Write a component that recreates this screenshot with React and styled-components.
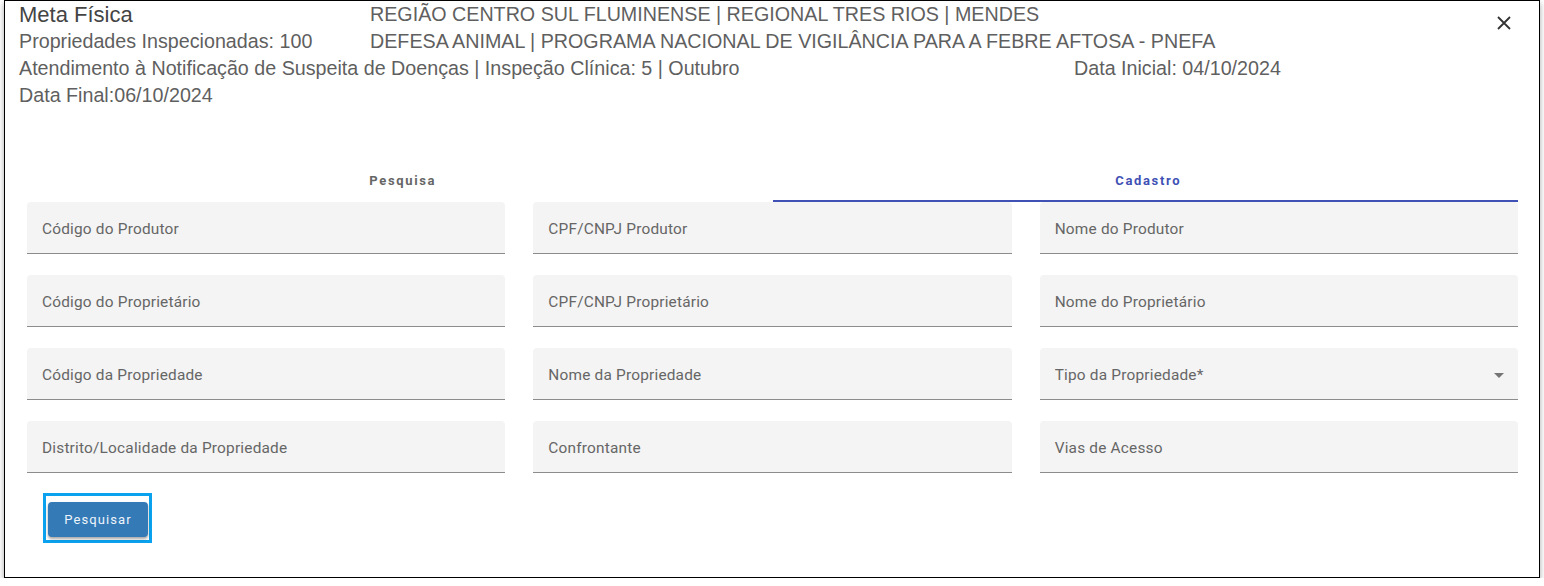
import React from 'react'
import styled, { createGlobalStyle } from 'styled-components'

const GlobalStyle = createGlobalStyle`
  body {
    margin: 0;
    background: #fff;
    font-family: "Liberation Sans", Arial, sans-serif;
  }
`

const Dialog = styled.div`
  box-sizing: border-box;
  margin: 0 4px;
  width: 1536px;
  height: 578px;
  border: 1px solid #000;
  background: #fff;
  box-shadow: 0 3px 6px rgba(0, 0, 0, 0.35);
  position: relative;
`

const Header = styled.div`
  padding: 0 0 0 14px;
  color: #5f5f5f;
  font-size: 19.7px;
  line-height: 27px;
`

const Line = styled.div`
  display: flex;
  white-space: nowrap;
`

const Cell = styled.span`
  width: ${p => p.w || 'auto'};
  flex: none;
  font-size: ${p => (p.big ? '22px' : 'inherit')};
  color: ${p => (p.big ? '#444' : 'inherit')};
`

const Close = styled.button`
  position: absolute;
  top: 12px;
  right: 25px;
  border: none;
  background: none;
  padding: 0;
  width: 20px;
  height: 20px;
  cursor: pointer;
`

const Body = styled.div`
  padding: 45px 21px 0 22px;
  font-family: Roboto, "Liberation Sans", sans-serif;
`

const Tabs = styled.div`
  display: flex;
  height: 48px;
`

const Tab = styled.div`
  flex: 1;
  display: flex;
  align-items: center;
  justify-content: center;
  font-size: 13px;
  font-weight: 700;
  letter-spacing: 1.65px;
  color: ${p => (p.active ? '#3f51b5' : '#666')};
  border-bottom: 2px solid ${p => (p.active ? '#3f51b5' : 'transparent')};
  box-sizing: border-box;
  padding: 6px 0 0 6px;
`

const Grid = styled.div`
  display: grid;
  grid-template-columns: repeat(3, 1fr);
  column-gap: 28px;
  row-gap: 21px;
`

const Field = styled.div`
  height: 52px;
  box-sizing: border-box;
  background: #f4f4f4;
  border-radius: 4px 4px 0 0;
  border-bottom: 1px solid #8c8c8c;
  display: flex;
  align-items: center;
  justify-content: space-between;
  padding: 3px 15px 0 15px;
  font-size: 15.4px;
  letter-spacing: 0.2px;
  color: #666;
`

const Arrow = styled.span`
  width: 0;
  height: 0;
  border-left: 5px solid transparent;
  border-right: 5px solid transparent;
  border-top: 5px solid #757575;
  margin-right: -1px;
`

const Actions = styled.div`
  padding: 20px 0 0 16px;
`

const Focus = styled.div`
  display: inline-block;
  border: 3px solid #0aa2ee;
  padding: 6px 1px 3px 2px;
`

const Button = styled.button`
  display: block;
  width: 100px;
  height: 35px;
  border: none;
  border-radius: 4px;
  background: #337ab7;
  color: #eef4fa;
  font-family: Roboto, "Liberation Sans", sans-serif;
  font-size: 13px;
  letter-spacing: 1.1px;
  box-shadow: 0 2px 3px rgba(0, 0, 0, 0.35);
  cursor: pointer;
`

const fields = [
  'Código do Produtor', 'CPF/CNPJ Produtor', 'Nome do Produtor',
  'Código do Proprietário', 'CPF/CNPJ Proprietário', 'Nome do Proprietário',
  'Código da Propriedade', 'Nome da Propriedade', 'Tipo da Propriedade*',
  'Distrito/Localidade da Propriedade', 'Confrontante', 'Vias de Acesso',
]

export default function App() {
  return (
    <>
      <GlobalStyle />
      <Dialog>
        <Header>
          <Line>
            <Cell w="351px" big>Meta Física</Cell>
            <Cell>REGIÃO CENTRO SUL FLUMINENSE | REGIONAL TRES RIOS | MENDES</Cell>
          </Line>
          <Line>
            <Cell w="351px">Propriedades Inspecionadas: 100</Cell>
            <Cell>DEFESA ANIMAL | PROGRAMA NACIONAL DE VIGILÂNCIA PARA A FEBRE AFTOSA - PNEFA</Cell>
          </Line>
          <Line>
            <Cell w="1055px">Atendimento à Notificação de Suspeita de Doenças | Inspeção Clínica: 5 | Outubro</Cell>
            <Cell>Data Inicial: 04/10/2024</Cell>
          </Line>
          <Line>
            <Cell>Data Final:06/10/2024</Cell>
          </Line>
        </Header>
        <Close aria-label="fechar">
          <svg width="20" height="20" viewBox="0 0 20 20">
            <path d="M4 4 L16 16 M16 4 L4 16" stroke="#333" strokeWidth="1.8" />
          </svg>
        </Close>
        <Body>
          <Tabs>
            <Tab>Pesquisa</Tab>
            <Tab active>Cadastro</Tab>
          </Tabs>
          <Grid>
            {fields.map(f => (
              <Field key={f}>
                <span>{f}</span>
                {f === 'Tipo da Propriedade*' && <Arrow />}
              </Field>
            ))}
          </Grid>
          <Actions>
            <Focus>
              <Button>Pesquisar</Button>
            </Focus>
          </Actions>
        </Body>
      </Dialog>
    </>
  )
}
